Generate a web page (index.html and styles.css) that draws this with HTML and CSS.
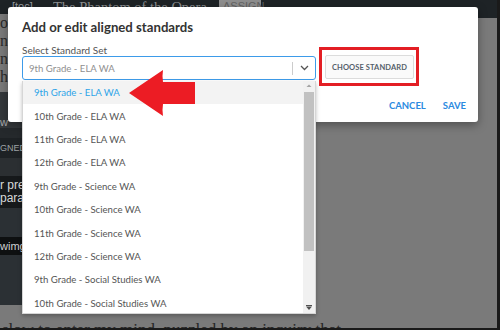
FILE: index.html
```html
<!DOCTYPE html>
<html>
<head>
<meta charset="utf-8">
<link rel="stylesheet" href="styles.css">
</head>
<body>
<div class="screen">
  <header class="topbar">
    <span class="toc">[toc]</span>
    <span class="book">The Phantom of the Opera</span>
    <span class="assign">ASSIGN</span>
  </header>
  <div class="middle">
    <aside class="side">
      <div class="side-page">ow<br>no<br>n<br>h</div>
      <div class="band b1"><span>w</span></div>
      <div class="band b2"></div>
      <div class="band b3"><span>GNED S</span></div>
      <div class="band b4"></div>
      <div class="band b5"><span>r pre</span><span>parag</span></div>
      <div class="band b6"></div>
      <div class="band b7"><span>wimg</span></div>
      <div class="band b8"></div>
    </aside>
    <div class="reader"></div>
  </div>
  <p class="lastline">slow to enter my mind, puzzled by an inquiry that</p>
</div>

<div class="modal">
  <h1 class="modal-title">Add or edit aligned standards</h1>
  <div class="field-row">
    <div class="field">
      <label class="field-label">Select Standard Set</label>
      <div class="select">
        <span class="select-value">9th Grade - ELA WA</span>
        <span class="select-sep"></span>
        <svg class="chev" width="9" height="6" viewBox="0 0 9 6"><path d="M1 1 L4.5 4.5 L8 1" fill="none" stroke="#555" stroke-width="1.3"/></svg>
      </div>
    </div>
    <div class="highlight">
      <button class="choose">CHOOSE STANDARD</button>
    </div>
  </div>
  <div class="actions">
    <span class="act">CANCEL</span>
    <span class="act">SAVE</span>
  </div>
</div>

<div class="dropdown">
  <ul class="options">
    <li class="opt active">9th Grade - ELA WA</li>
    <li class="opt">10th Grade - ELA WA</li>
    <li class="opt">11th Grade - ELA WA</li>
    <li class="opt">12th Grade - ELA WA</li>
    <li class="opt">9th Grade - Science WA</li>
    <li class="opt">10th Grade - Science WA</li>
    <li class="opt">11th Grade - Science WA</li>
    <li class="opt">12th Grade - Science WA</li>
    <li class="opt">9th Grade - Social Studies WA</li>
    <li class="opt">10th Grade - Social Studies WA</li>
  </ul>
  <div class="scrollbar">
    <svg class="sb-arrow" width="12" height="10" viewBox="0 0 12 10"><path d="M3.5 6 L6 3.5 L8.5 6 Z" fill="#a3a3a3"/></svg>
    <div class="thumb"></div>
    <div class="track"></div>
    <svg class="sb-arrow" width="12" height="10" viewBox="0 0 12 10"><path d="M3 3.5 L9 3.5 L6 7 Z" fill="#505050"/><rect x="3" y="2" width="6" height="1" fill="#505050"/></svg>
  </div>
</div>

<svg class="arrow" width="70" height="50" viewBox="0 0 70 50">
  <path d="M0 23 L34 0 Q33 6 34 12 L66 12 L66 34 L34 34 Q33 40 34 46 Z" fill="#ec1c24"/>
</svg>
</body>
</html>
```

FILE: styles.css
```css
* { box-sizing: border-box; }
html, body { margin: 0; padding: 0; }
body {
  width: 500px;
  height: 330px;
  overflow: hidden;
  background: #1a1a1a;
  font-family: Lato, "Open Sans", sans-serif;
  position: relative;
}
.screen {
  width: 497px;
  height: 328px;
  background: #7a7a7a;
  display: flex;
  flex-direction: column;
  overflow: hidden;
}
.topbar {
  height: 18px;
  flex: none;
  background: #1e2326;
  display: flex;
  align-items: flex-start;
  color: #8d9194;
  font-family: "Liberation Serif", serif;
  overflow: hidden;
}
.toc { flex: none; margin-left: 12px; width: 20px; font-size: 11px; line-height: 13px; font-family: "Liberation Sans", sans-serif; color: #9a9ea1; }
.book { flex: none; margin-left: 21px; width: 166px; font-size: 14.5px; line-height: 15px; color: #8c8f91; white-space: nowrap; overflow: hidden; }
.assign {
  flex: none;
  width: 42px;
  height: 18px;
  background: #8e8e8e;
  color: #626262;
  font-family: "Liberation Sans", sans-serif;
  font-size: 11px;
  line-height: 13px;
  padding-left: 4px;
}
.middle { flex: 1; display: flex; }
.side { width: 40px; display: flex; flex-direction: column; }
.side-page {
  background: #7a7a7a;
  font-family: "Liberation Serif", serif;
  font-size: 16px;
  line-height: 18px;
  color: #2a2a2a;
  margin-top: -4px;
  height: 78px;
  overflow: hidden;
}
.band {
  display: flex;
  flex-direction: column;
  justify-content: center;
  color: #c9cccd;
  font-family: "Liberation Sans", sans-serif;
  font-size: 12px;
  white-space: nowrap;
  overflow: hidden;
}
.b1 { height: 36px; background: #34383b; justify-content: flex-end; font-size: 11px; line-height: 12px; color: #aaa; }
.b2 { height: 10px; background: #25292c; }
.b3 { height: 20px; background: #1d2124; font-size: 9px; color: #9ea2a4; }
.b4 { height: 18px; background: #2b2f32; }
.b5 { height: 32px; background: #16191b; font-size: 12px; line-height: 13px; color: #d7d9da; }
.b6 { height: 29px; background: #2b3034; }
.b7 { height: 18px; background: #0e1011; font-size: 11px; color: #cfd1d2; }
.b8 { height: 50px; background: #2b3034; }
.reader { flex: 1; background: #7a7a7a; }
.lastline {
  margin: 0;
  height: 23px;
  flex: none;
  padding-left: 2px;
  font-family: "Liberation Serif", serif;
  font-size: 17px;
  line-height: 49px;
  color: #262626;
  white-space: nowrap;
  overflow: hidden;
}

/* modal */
.modal {
  position: absolute;
  left: 8px;
  top: 7px;
  width: 470px;
  height: 115px;
  background: #fff;
  border-radius: 3px;
  box-shadow: 0 3px 10px rgba(0,0,0,0.35);
  padding: 12px 12px 0 14px;
  display: flex;
  flex-direction: column;
}
.modal-title {
  margin: 0;
  font-size: 13.2px;
  line-height: 16px;
  font-weight: 700;
  color: #333;
}
.field-row {
  display: flex;
  align-items: flex-start;
  gap: 3px;
  margin-top: 9px;
}
.field { display: flex; flex-direction: column; width: 294px; }
.field-label {
  font-size: 10px;
  line-height: 12px;
  color: #555;
}
.select {
  height: 24px;
  border: 1px solid #3d9be9;
  border-radius: 3px;
  display: flex;
  align-items: center;
  padding-left: 6px;
}
.select-value { flex: 1; font-size: 9.6px; color: #8f8f8f; }
.select-sep { width: 1px; height: 13px; background: #ccc; margin-right: 7px; }
.chev { margin-right: 6px; }
.highlight {
  margin-top: 3px;
  border: 3px solid #e31e24;
  padding: 5px 2px 4px 3px;
}
.choose {
  display: block;
  width: 89px;
  height: 24px;
  border: 1px solid #dcdcdc;
  border-radius: 2px;
  background: #fafafa;
  font-family: Lato, sans-serif;
  font-weight: 700;
  font-size: 7.5px;
  letter-spacing: 0.1px;
  color: #55606a;
  padding: 0;
}
.actions {
  display: flex;
  justify-content: flex-end;
  gap: 17px;
  margin-top: 14px;
}
.act {
  font-size: 9.5px;
  line-height: 12px;
  font-weight: 700;
  color: #2b8ae0;
}

/* dropdown */
.dropdown {
  position: absolute;
  left: 22px;
  top: 81px;
  width: 294px;
  height: 233px;
  background: #fff;
  border: 1px solid #d6d6d6;
  border-top: none;
  box-shadow: 0 2px 4px rgba(0,0,0,0.25);
  display: flex;
  overflow: hidden;
}
.options { list-style: none; margin: 0; padding: 0; flex: 1; }
.opt {
  height: 23.4px;
  display: flex;
  align-items: center;
  padding-left: 11px;
  font-size: 9.6px;
  color: #555;
}
.opt.active { background: #f3f3f3; color: #2da4e8; }
.scrollbar {
  width: 12px;
  background: #f1f1f1;
  display: flex;
  flex-direction: column;
}
.sb-arrow { display: block; flex: none; }
.thumb { height: 159px; background: #c1c1c1; margin: 1px 1px 0 1px; }
.track { flex: 1; }

.arrow {
  position: absolute;
  left: 129px;
  top: 70px;
}
```
